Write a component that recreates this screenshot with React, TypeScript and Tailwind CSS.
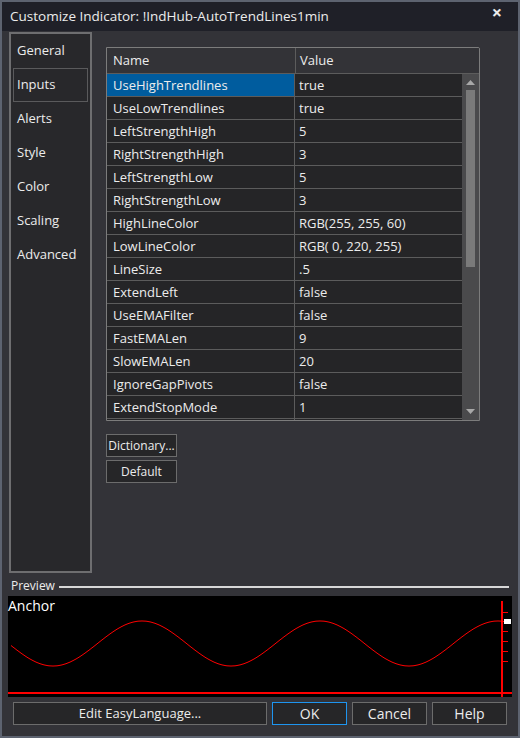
import React from 'react';

// =============================================================================
// DATA
// =============================================================================
const TABS = ['General', 'Inputs', 'Alerts', 'Style', 'Color', 'Scaling', 'Advanced'];

const INPUTS: [string, string][] = [
  ['UseHighTrendlines', 'true'],
  ['UseLowTrendlines', 'true'],
  ['LeftStrengthHigh', '5'],
  ['RightStrengthHigh', '3'],
  ['LeftStrengthLow', '5'],
  ['RightStrengthLow', '3'],
  ['HighLineColor', 'RGB(255, 255, 60)'],
  ['LowLineColor', 'RGB( 0, 220, 255)'],
  ['LineSize', '.5'],
  ['ExtendLeft', 'false'],
  ['UseEMAFilter', 'false'],
  ['FastEMALen', '9'],
  ['SlowEMALen', '20'],
  ['IgnoreGapPivots', 'false'],
  ['ExtendStopMode', '1'],
];

// sine wave for the preview canvas
const wavePath = () => {
  let d = '';
  for (let x = 3; x <= 494; x += 1) {
    const y = 47.5 + 22.5 * Math.cos((2 * Math.PI * (x - 45)) / 178);
    d += `${x === 3 ? 'M' : 'L'}${x},${y.toFixed(1)} `;
  }
  return d;
};

// =============================================================================
// SMALL PARTS
// =============================================================================
function InputsGrid() {
  return (
    <div className="w-[374px] h-[374px] border border-[#7c7c7c] rounded-tr-[2px] flex flex-col overflow-hidden">
      {/* header */}
      <div className="h-[26px] flex shrink-0 border-b border-[#5c5c5c] bg-[#333337]">
        <div className="w-[189px] pl-[6px] pt-[1px] flex items-center border-r border-[#5c5c5c]">Name</div>
        <div className="flex-1 pl-[4px] pt-[1px] flex items-center">Value</div>
      </div>
      <div className="flex flex-1 min-h-0">
        {/* rows */}
        <div className="flex-1 bg-[#252527] overflow-hidden">
          {INPUTS.map(([name, value], i) => (
            <div key={name} className="h-[23px] flex border-b border-[#5c5c5c]">
              <div
                className={`w-[188px] pl-[6px] pt-[2px] flex items-center border-r border-[#5c5c5c] ${
                  i === 0 ? 'bg-[#005c9e]' : ''
                }`}
              >
                {name}
              </div>
              <div className="flex-1 pl-[4px] pt-[2px] flex items-center">{value}</div>
            </div>
          ))}
          <div className="h-[23px] flex">
            <div className="w-[188px] border-r border-[#5c5c5c]" />
          </div>
        </div>
        {/* scrollbar */}
        <div className="w-[17px] bg-[#4a4a4c] flex flex-col items-center">
          <div className="h-[16px] flex items-center justify-center">
            <svg width="9" height="5" viewBox="0 0 9 5">
              <path d="M4.5 0 L9 5 L0 5 Z" fill="#a8a8a8" />
            </svg>
          </div>
          <div className="w-[9px] h-[177px] bg-[#7a7a7a]" />
          <div className="flex-1" />
          <div className="h-[18px] flex items-center justify-center">
            <svg width="9" height="5" viewBox="0 0 9 5">
              <path d="M0 0 L9 0 L4.5 5 Z" fill="#a8a8a8" />
            </svg>
          </div>
        </div>
      </div>
    </div>
  );
}

function Btn({ children, className = '' }: { children: React.ReactNode; className?: string }) {
  return (
    <div
      className={`flex items-center justify-center bg-[#262628] border border-[#6c6c6c] ${className}`}
    >
      {children}
    </div>
  );
}

// =============================================================================
// APP
// =============================================================================
export default function App() {
  return (
    <div
      className="w-[520px] h-[738px] bg-[#333338] border-2 border-t-0 border-[#5d6370] flex flex-col text-[#ececec] text-[13px] overflow-hidden"
      style={{ fontFamily: '"Open Sans", "Noto Sans", Arial, sans-serif' }}
    >
      {/* Title bar */}
      <div className="h-[31px] bg-[#1f2028] flex items-center justify-between pl-[8px] pr-[16px] shrink-0 -mx-[2px] border-t-2 border-x-2 border-[#5d6370]">
        <span className="text-[13.5px]">Customize Indicator: !IndHub-AutoTrendLines1min</span>
        <span className="text-[18px] font-bold -mt-[8px]">×</span>
      </div>

      {/* Body */}
      <div className="flex pl-[7px] pt-[1px] h-[545px] shrink-0">
        {/* Tabs */}
        <div className="w-[83px] h-[541px] border-2 border-[#6e6e70] bg-[#28282b] px-[2px] flex flex-col">
          {TABS.map((t) => (
            <div
              key={t}
              className={`h-[34px] flex items-center pl-[3px] ${
                t === 'Inputs' ? 'border border-[#5a5a5c]' : 'border border-transparent'
              }`}
            >
              {t}
            </div>
          ))}
        </div>

        {/* Inputs panel */}
        <div className="pl-[14px] pt-[15px] flex flex-col">
          <InputsGrid />
          <div className="flex flex-col gap-[3px] mt-[13px] text-[12px]">
            <Btn className="w-[71px] h-[23px]">Dictionary...</Btn>
            <Btn className="w-[71px] h-[23px]">Default</Btn>
          </div>
        </div>
      </div>

      {/* Preview */}
      <div className="flex items-center pl-[9px] pr-[9px] h-[20px] shrink-0">
        <span className="text-[12px]">Preview</span>
        <div className="flex-1 h-[2px] bg-[#d8d8d8] ml-[4px] mt-[1px]" />
      </div>
      <div className="ml-[6px] w-[504px] h-[101px] bg-black relative shrink-0">
        <span className="absolute left-0 -top-[1px] text-[14px] text-white">Anchor</span>
        <svg width="504" height="101" className="absolute inset-0">
          <path d={wavePath()} fill="none" stroke="#ff0000" strokeWidth="1" />
          <rect x="0" y="96" width="504" height="2" fill="#ff0000" />
          <rect x="493" y="5" width="2" height="96" fill="#ff0000" />
          {[16, 35, 45, 55, 65].map((y) => (
            <rect key={y} x="495" y={y} width="5" height="1" fill="#ff0000" />
          ))}
          <rect x="495" y="25" width="1" height="1" fill="#ff0000" />
          <rect x="496" y="23" width="7" height="5" fill="#ffffff" />
        </svg>
      </div>

      {/* Bottom buttons */}
      <div className="flex pl-[11px] pt-[5px] gap-[5px] text-[14px]">
        <Btn className="w-[254px] h-[23px] text-[13px]">Edit EasyLanguage...</Btn>
        <Btn className="w-[75px] h-[23px] !border-[#1e95f0]">OK</Btn>
        <Btn className="w-[75px] h-[23px]">Cancel</Btn>
        <Btn className="w-[75px] h-[23px]">Help</Btn>
      </div>
    </div>
  );
}
